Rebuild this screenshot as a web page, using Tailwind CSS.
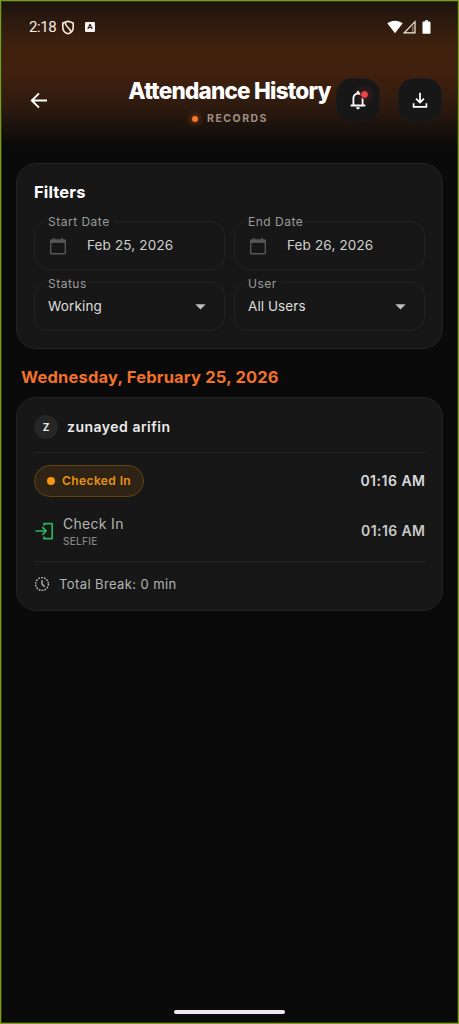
<!DOCTYPE html>
<html lang="en">
<head>
<meta charset="utf-8">
<title>Attendance History</title>
<script src="https://cdn.jsdelivr.net/npm/@tailwindcss/browser@4"></script>
</head>
<body class="bg-[#0a0a0a]">
<div class="relative flex h-[1024px] w-[459px] flex-col overflow-hidden border border-[#7f981f] bg-[#0a0a0a] font-['Inter',sans-serif] text-white shadow-[inset_0_0_0_1px_#2c3a0a]">
  <header class="mx-px mt-px h-[146px] shrink-0 bg-[linear-gradient(to_bottom,#1c130d_0px,#2a190f_16px,#3b1f0e_38px,#41210e_52px,#3f200e_75px,#2d1a0f_105px,#1a120c_125px,#0a0a0a_145px)]">
    <div class="flex h-[50px] items-center pl-[27px] pr-[26px] text-[#f7ebe3]">
      <span class="w-[29px] whitespace-nowrap font-['Roboto',sans-serif] text-[15px] leading-5 tracking-[-0.4px]">2:18</span>
      <svg class="ml-[3px] h-[15px] w-[14px]" viewBox="0 0 14 15" fill="none" stroke="currentColor" stroke-width="1.600" stroke-linejoin="round"><path d="M7 1.200 12.200 3v4.200c0 3.200-2 5.600-5.200 6.600C3.800 12.800 1.800 10.400 1.800 7.200V3z"/><path d="M4.200 2.400C4.200 7 9 7.500 10 12"/></svg>
      <span class="ml-[10px] flex h-[10px] w-[10px] items-center justify-center rounded-[1px] bg-[#faf3ee] font-['Roboto',sans-serif] text-[8px] font-bold leading-none text-[#2a190f]">A</span>
      <span class="grow"></span>
      <svg class="h-[14px] w-[16px]" viewBox="0 0 16 14" fill="#fff"><path d="M.3 3.300C4.700-.2 11.300-.2 15.700 3.300L8 13.200z"/></svg>
      <svg class="h-[14px] w-[13px]" viewBox="0 0 13 14" fill="none" stroke="#f7ebe3" stroke-width="1.200"><path d="M12 1.700V12.800H1.300z"/><path d="M9.800 6v6.500" stroke-opacity=".5"/></svg>
      <svg class="ml-[6px] h-[14px] w-[9px]" viewBox="0 0 9 14" fill="#fff"><path d="M3 .3h3v1.200h1.600q.9 0 .9.900v10.500q0 .9-.9.900H1.400q-.9 0-.9-.9V2.400q0-.9.900-.9H3z"/></svg>
    </div>
    <div class="mt-[26px] flex h-11 items-start">
      <svg class="ml-[25px] mt-[11px] h-6 w-6 shrink-0" viewBox="0 0 24 24" fill="none" stroke="#fff" stroke-width="1.900"><path d="M20 11.500H4.800M12 4.300 4.800 11.500 12 18.700"/></svg>
      <div class="ml-[77px] flex w-[203px] shrink-0 flex-col items-center">
        <h1 class="whitespace-nowrap text-[22.500px] font-extrabold leading-[26px] tracking-[-0.780px]">Attendance History</h1>
        <div class="mt-[8px] flex h-[14px] items-center gap-[9px] pl-px">
          <span class="h-[6px] w-[6px] rounded-full bg-[#f47a2c] shadow-[0_0_7px_1px_#f9731680]"></span>
          <span class="text-[10.500px] font-bold leading-[14px] tracking-[1.500px] text-[#a08f85]">RECORDS</span>
        </div>
      </div>
      <button class="ml-[5px] flex h-11 w-11 shrink-0 items-center justify-center rounded-[16px] border border-[#1e1a18] bg-[#171717]">
        <span class="relative h-[22px] w-[22px]">
          <svg class="h-[22px] w-[22px]" viewBox="0 0 24 24" fill="#fff"><path d="M4 19v-2h2v-7q0-2.075 1.250-3.688T10.500 4.200v-.7q0-.625.438-1.062T12 2t1.063.438.437 1.062v.7q2 .5 3.250 2.112T18 10v7h2v2zm8 3q-.825 0-1.412-.587T10 20h4q0 .825-.587 1.413T12 22m-4-5h8v-7q0-1.650-1.175-2.825T12 6 9.175 7.175 8 10z"/></svg>
          <span class="absolute left-[13px] top-[1px] h-[9px] w-[9px] rounded-full border border-[#171717] bg-[#ef4444] shadow-[0_0_9px_2px_#ef444433]"></span>
        </span>
      </button>
      <button class="ml-[18px] flex h-11 w-11 shrink-0 items-center justify-center rounded-[16px] border border-[#1e1a18] bg-[#171717]">
        <svg class="h-[22px] w-[22px]" viewBox="0 0 24 24" fill="none" stroke="#fff" stroke-width="1.900" stroke-linejoin="round"><path d="M12 4v10.500M7.700 10.600l4.300 4.300 4.300-4.300M5 15.500v4h14v-4"/></svg>
      </button>
    </div>
  </header>

  <main class="flex flex-col px-[15px] pt-[15px]">
    <section class="h-[186px] rounded-[20px] border border-[#232323] bg-[#171717] px-[17px] pt-[18px]">
      <h2 class="text-[16.500px] font-bold leading-5 tracking-[0.150px]">Filters</h2>
      <div class="mt-[19px] grid grid-cols-2 gap-x-[9px] gap-y-[12px]">
        <div class="relative flex h-[49px] items-center rounded-[14px] border border-[#222222] pl-[14px]">
          <span class="absolute left-[9px] top-[-9px] bg-[#171717] px-[4px] text-[12px] leading-[18px] tracking-[0.5px] text-[#9b9b9b]">Start Date</span>
          <svg class="h-[18px] w-[18px]" viewBox="0 0 18 18" fill="none" stroke="#555" stroke-width="1.400"><rect x="1.700" y="3" width="14.600" height="13.800" rx=".8"/><path d="M1.700 4.400h14.600" stroke-width="3"/><path d="M4.800.8v3M13.200.8v3"/></svg>
          <span class="-mt-px ml-[20px] text-[13.500px] leading-5 tracking-[0.150px] text-[#d0d0d0]">Feb 25, 2026</span>
        </div>
        <div class="relative flex h-[49px] items-center rounded-[14px] border border-[#222222] pl-[14px]">
          <span class="absolute left-[9px] top-[-9px] bg-[#171717] px-[4px] text-[12px] leading-[18px] tracking-[0.5px] text-[#9b9b9b]">End Date</span>
          <svg class="h-[18px] w-[18px]" viewBox="0 0 18 18" fill="none" stroke="#555" stroke-width="1.400"><rect x="1.700" y="3" width="14.600" height="13.800" rx=".8"/><path d="M1.700 4.400h14.600" stroke-width="3"/><path d="M4.800.8v3M13.200.8v3"/></svg>
          <span class="-mt-px ml-[20px] text-[13.500px] leading-5 tracking-[0.150px] text-[#d0d0d0]">Feb 26, 2026</span>
        </div>
        <div class="relative flex h-[49px] items-center justify-between rounded-[14px] border border-[#222222] pl-[13px] pr-[18px]">
          <span class="absolute left-[9px] top-[-8px] bg-[#171717] px-[4px] text-[12px] leading-[18px] tracking-[0.5px] text-[#9b9b9b]">Status</span>
          <span class="-mt-px text-[13.500px] leading-5 tracking-[0.150px] text-[#dedede]">Working</span>
          <svg class="mt-[1px] h-[6px] w-[11px]" viewBox="0 0 11 6" fill="#bdbdbd"><path d="M.3.300h10.400L5.500 5.500z"/></svg>
        </div>
        <div class="relative flex h-[49px] items-center justify-between rounded-[14px] border border-[#222222] pl-[13px] pr-[18px]">
          <span class="absolute left-[9px] top-[-8px] bg-[#171717] px-[4px] text-[12px] leading-[18px] tracking-[0.5px] text-[#9b9b9b]">User</span>
          <span class="-mt-px text-[13.500px] leading-5 tracking-[0.080px] text-[#dedede]">All Users</span>
          <svg class="mt-[1px] h-[6px] w-[11px]" viewBox="0 0 11 6" fill="#bdbdbd"><path d="M.3.300h10.400L5.500 5.500z"/></svg>
        </div>
      </div>
    </section>

    <h2 class="mt-[18px] pl-[5px] text-[16.500px] font-bold leading-5 tracking-[0.180px] text-[#f0712a]">Wednesday, February 25, 2026</h2>

    <section class="mt-[10px] h-[214px] rounded-[20px] border border-[#232323] bg-[#171717] px-[17px]">
      <div class="flex h-[55px] items-center gap-[9px] border-b border-[#242424] pt-[4px]">
        <span class="flex h-6 w-6 items-center justify-center rounded-full bg-[#262626] text-[10px] font-bold text-[#e8e8e8]">Z</span>
        <span class="text-[14px] font-semibold leading-5 tracking-[0.5px] text-[#ebebeb]">zunayed arifin</span>
      </div>
      <div class="mt-[12px] flex h-8 items-center justify-between">
        <span class="flex h-8 w-[110px] items-center gap-[7px] rounded-full border border-[#5f4312] bg-[#2e2315] pl-[12px]">
          <span class="h-2 w-2 rounded-full bg-[#f9980f]"></span>
          <span class="whitespace-nowrap text-[12px] font-semibold leading-4 tracking-[0.4px] text-[#e8930f]">Checked In</span>
        </span>
        <span class="-mr-[0.5px] text-[14px] font-semibold leading-5 tracking-[0.5px] text-[#d9d9d9]">01:16 AM</span>
      </div>
      <div class="mt-[16px] flex h-[36px] items-center">
        <svg class="h-5 w-5" viewBox="0 0 20 20" fill="none" stroke="#2bb560" stroke-width="1.700" stroke-linejoin="round"><path d="M1.500 10H12M8.300 6.200 12.200 10l-3.900 3.800M10 4.800V2.600h8.200v15H10v-2.200"/></svg>
        <div class="ml-[9px] flex flex-col">
          <span class="text-[14px] leading-5 tracking-[0.3px] text-[#b4b4b4]">Check In</span>
          <span class="text-[10px] font-medium leading-[15px] tracking-[0.3px] text-[#858585]">SELFIE</span>
        </div>
        <span class="-mr-[0.4px] ml-auto text-[14px] font-semibold leading-5 tracking-[0.4px] text-[#c8c8c8]">01:16 AM</span>
      </div>
      <div class="mt-[12px] flex h-[43px] items-center border-t border-[#242424] pt-px">
        <svg class="h-4 w-4" viewBox="0 0 16 16" fill="none" stroke="#b8b8b8" stroke-width="1.400"><circle cx="8" cy="8" r="6.400" stroke-dasharray="1.750 1.101"/><path d="M8 4.200V8l2.600 2.700"/></svg>
        <span class="ml-[9px] text-[13px] leading-5 tracking-[0.4px] text-[#b4b4b4]">Total Break: 0 min</span>
      </div>
    </section>
  </main>
  <div class="mb-[9px] ml-[173px] mt-auto h-[4px] w-[111px] shrink-0 rounded-full bg-[#f0e8ec]"></div>
</div>
</body>
</html>
